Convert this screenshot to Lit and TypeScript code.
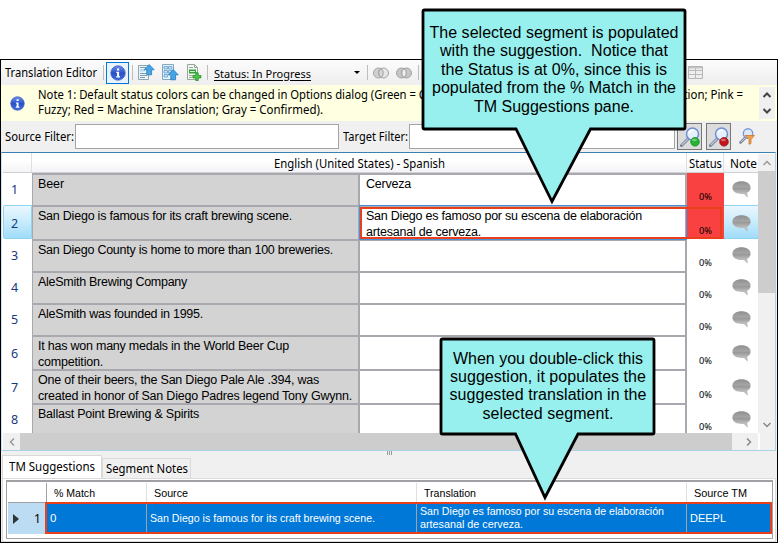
import { LitElement, html, css, svg } from "lit";
import { customElement, property } from "lit/decorators.js";
import { classMap } from "lit/directives/class-map.js";

/** One line of text that fills the given width, by tracking or (squeeze) by a horizontal scale. */
@customElement("fit-line")
class FitLine extends LitElement {
  @property() text = "";
  @property({ type: Number }) w = 0;
  @property({ type: Boolean }) squeeze = false;
  static styles = css`
    :host { display: block; white-space: pre; }
    span { display: inline-block; text-decoration: inherit; transform-origin: 0 50%; }
  `;
  render() {
    return html`<span>${this.text}</span>`;
  }
  firstUpdated() {
    const el = this.renderRoot.querySelector("span")!;
    if (!this.w) return;
    const natural = el.getBoundingClientRect().width;
    if (this.squeeze) el.style.transform = `scaleX(${this.w / natural})`;
    else el.style.letterSpacing = `${(this.w - natural) / this.text.length}px`;
  }
}

type Line = [string, number];
interface Segment {
  h: number;
  source: Line[];
  target?: Line[];
  red?: boolean;
  selected?: boolean;
}

const SEGMENTS: Segment[] = [
  { h: 32, source: [["Beer", 26]], target: [["Cerveza", 45]], red: true },
  {
    h: 34,
    source: [["San Diego is famous for its craft brewing scene.", 254]],
    target: [["San Diego es famoso por su escena de elaboración", 276], ["artesanal de cerveza.", 115]],
    red: true,
    selected: true,
  },
  { h: 32, source: [["San Diego County is home to more than 100 breweries.", 295]] },
  { h: 32, source: [["AleSmith Brewing Company", 149]] },
  { h: 32, source: [["AleSmith was founded in 1995.", 165]] },
  { h: 34, source: [["It has won many medals in the World Beer Cup", 251], ["competition.", 65]] },
  { h: 34, source: [["One of their beers, the San Diego Pale Ale .394, was", 281], ["created in honor of San Diego Padres legend Tony Gwynn.", 314]] },
  { h: 32, source: [["Ballast Point Brewing & Spirits", 161]] },
];

const lines = (ls: Line[] = []) => ls.map(([t, w]) => html`<fit-line .text=${t} .w=${w}></fit-line>`);
const tight = (ls: Line[]) => ls.map(([t, w]) => html`<fit-line .text=${t} .w=${w} .squeeze=${true}></fit-line>`);

const info = (s: number) => html`<svg width=${s} height=${s} viewBox="0 0 16 16">
  <defs><linearGradient id="ig" x1="0" y1="0" x2="0" y2="1"><stop offset="0" stop-color="#6c93ea"/><stop offset=".5" stop-color="#2a50c8"/><stop offset="1" stop-color="#3f6fe0"/></linearGradient></defs>
  <circle cx="8" cy="8" r="7.200" fill="url(#ig)" stroke="#3c5cc0" stroke-width=".8"/>
  <path d="M7 3.400h2.200v2H7zM6.300 6.800h2.800v4.400h.9v1.200H6.200v-1.200h.9V8h-.8z" fill="#fff"/></svg>`;

const arrowUp = (x: number, y: number) => svg`<path d="M${x} ${y}l5 5.2h-2.6v5h-4.8v-5h-2.6z" fill="#45a5e6" stroke="#2878b8" stroke-width=".8"/>`;

const docUp = html`<svg width="17" height="17" viewBox="0 0 17 17">
  <path d="M.5 1.500h10v14H.5z" fill="#eef5f8" stroke="#8aa7b8"/>
  <path d="M2 3.500h6M2 9.500h7M2 11.500h7M2 13.500h5" stroke="#7b9db2"/><path d="M2 5h5v2.500H2z" fill="#b9d9ea"/>
  ${arrowUp(11.2, 0.6)}</svg>`;
const docUp2 = html`<svg width="17" height="17" viewBox="0 0 17 17">
  <path d="M.5 .5h11v15H.5z" fill="#e8f3fa" stroke="#7fa9c4"/>
  <path d="M2 2.500h3.500v2.500H2zM6.500 2.500H10v2.500H6.500zM2 6.500h3.500V9H2zM6.500 6.500H10V9H6.500zM2 10.500h3.500V13H2z" fill="#cbe4f5" stroke="#5fa0cd" stroke-width=".8"/>
  ${arrowUp(11.2, 5.6)}</svg>`;
const docPlus = html`<svg width="17" height="17" viewBox="0 0 17 17">
  <path d="M1.500 .5h7l3 3v12h-10z" fill="#f3f5f2" stroke="#9aa59a"/><path d="M8.500 .5v3h3" fill="none" stroke="#9aa59a"/>
  <path d="M3 3.500h4M3 11.500h4M3 13.500h5" stroke="#9cab9c"/><path d="M3 5.500h7v4H3z" fill="#35a33c"/><path d="M4 7.500h5" stroke="#c9efc9"/>
  <path d="M9.800 8.800h2.400v2.700h2.700v2.400h-2.700v2.700H9.800v-2.700H7.100v-2.400h2.700z" fill="#4cc944" stroke="#1e8a25" stroke-width=".8"/></svg>`;

const rings = (v: number) => html`<svg width="16" height="12" viewBox="0 0 16 12">
  <g fill=${v ? "#c6c6c6" : "#d0d0d0"} stroke="#a2a2a2"><circle cx="5.500" cy="6" r="5"/><circle cx="10.500" cy="6" r="5" fill=${v ? "#c6c6c6" : "#e6e6e6"}/></g>
  <ellipse cx="8" cy="6" rx="2.200" ry="4" fill=${v ? "#efefef" : "#d8d8d8"} stroke="#a2a2a2"/></svg>`;

const table = html`<svg width="16" height="14" viewBox="0 0 16 14"><path d="M.5 .5h14v12H.5z" fill="#eee" stroke="#b5b5b5"/><path d="M.5 4.500h14M.5 8.500h14M7.500 1v11.500" stroke="#b9b9b9"/><path d="M1 1h13v1.500H1z" fill="#c4c4c4"/></svg>`;

const lens = (dot: string) => html`<svg width="20" height="20" viewBox="0 0 20 20">
  <path d="M1.500 18.500L8 12" stroke="#6f7f9a" stroke-width="3" stroke-linecap="round"/><path d="M1.800 18L8 12" stroke="#c5ccd8" stroke-width="1.200"/>
  <circle cx="12.500" cy="7" r="6" fill="#e6effc" stroke="#6e8fd8" stroke-width="1.500"/><path d="M9 6.500a4 4 0 0 1 5-3.200" stroke="#fff" stroke-width="1.600" fill="none"/>
  <circle cx="15" cy="14.800" r="4.300" fill=${dot === "g" ? "#22b432" : "#c3161c"} stroke=${dot === "g" ? "#168a22" : "#98100f"} stroke-width=".8"/>
  <ellipse cx="14.400" cy="13" rx="2.500" ry="1.300" fill="#fff" opacity=".35"/></svg>`;
const lensFunnel = html`<svg width="16" height="17" viewBox="0 0 16 17">
  <path d="M1.500 14.500L6 10" stroke="#7b88a0" stroke-width="2.600" stroke-linecap="round"/><path d="M1.800 14L6 10" stroke="#cdd3de"/>
  <circle cx="9" cy="5.500" r="4.700" fill="#dce9fb" stroke="#7a97dc" stroke-width="1.400"/>
  <path d="M6 7.500h9.500l-3.500 4v4l-2 .8v-4.800z" fill="#f0a050" stroke="#c87828" stroke-width=".8"/></svg>`;

const bubble = html`<svg width="19" height="17" viewBox="0 0 19 17">
  <defs><linearGradient id="bg" x1="0" y1="0" x2="0" y2="1"><stop offset="0" stop-color="#8f8f8f"/><stop offset=".38" stop-color="#a6a6a6"/><stop offset=".42" stop-color="#959595"/><stop offset=".8" stop-color="#c2c2c2"/><stop offset="1" stop-color="#a4a4a4"/></linearGradient></defs>
  <path d="M9.500 .2C14.800.2 18.600 2.700 18.600 6.600c0 2.400-1.400 4.200-3.400 5.200l.6 4.600-4-3.400C4.600 13.600.4 10.800.4 6.600.4 2.700 4.200.2 9.500.2z" fill="url(#bg)"/></svg>`;

const chev = (d: string, c: string, w = 1.5) => html`<svg width="10" height="10" viewBox="0 0 10 10"><path d=${d} fill="none" stroke=${c} stroke-width=${w}/></svg>`;
const UP = "M1.500 7L5 3.500 8.500 7";
const DOWN = "M1.500 3L5 6.500 8.500 3";
const LEFT = "M7 1.500L3.500 5 7 8.500";
const RIGHT = "M3 1.500L6.500 5 3 8.500";

@customElement("app-root")
class AppRoot extends LitElement {
  static styles = css`
    :host { display: block; position: relative; width: 778px; height: 543px; overflow: hidden; background: #fff; color: #000;
      font: 12px/16px "Noto Sans", "Open Sans", sans-serif; padding-top: 59px; box-sizing: border-box; }
    * { box-sizing: border-box; }
    svg { display: block; flex: none; }
    .window { height: 484px; border: 1px solid #000; background: #f0f0f0; display: flex; flex-direction: column; }
    .toolbar { height: 25px; display: flex; align-items: center; padding-left: 4px; background: linear-gradient(#fcfcfc, #eeeeee); }
    .toolbar > * { flex: none; }
    .toolbar .name { width: 98px; }
    .sep { width: 1px; height: 15px; background: #bdbdbd; }
    .toggle { width: 23px; height: 22px; border: 1px solid #0078d7; background: #eaf3fb; display: grid; place-items: center; margin: 0 3px 0 2px; }
    .docs { display: flex; gap: 7px; width: 65px; margin: 0 4px 0 5px; }
    .status { text-decoration: underline; margin-left: 6px; width: 140px; font-size: 11.5px; text-underline-offset: 2px; padding-top: 2px; }
    .caret { border: 3px solid transparent; border-top: 3px solid #000; border-bottom: 0; margin-right: 7px; }
    .rings { display: flex; gap: 7px; margin: 0 6px 0 5px; }
    .table { margin-left: 269px; }
    .notice { height: 36px; background: #ffffe1; display: flex; padding-left: 9px; }
    .notice svg { margin-top: 11px; }
    .notice .copy { padding: 2px 0 0 13px; line-height: 15px; width: 390px; flex: none; }
    .notice .tail { padding-top: 2px; line-height: 15px; margin-left: 262px; width: 74px; flex: none; }
    .notice .spin { width: 16px; height: 32px; margin: 2px 2px 0 auto; background: #f0f0f0; display: flex; flex-direction: column; justify-content: space-around; align-items: center; }
    .notice .spin svg { margin: 0; }
    .filters { height: 31px; display: flex; align-items: center; padding-left: 4px; }
    .filters > * { flex: none; }
    .filters .label { width: 70px; }
    .filters .label.t { width: 66px; margin-left: 4px; }
    .field { width: 264px; height: 25px; background: #fff; border: 1px solid #a3a3a8; }
    .field.t { width: 266px; }
    .find { width: 25px; height: 27px; border: 1px solid #777; background: #dcdcdc; display: grid; place-items: center; margin-left: 2px; }
    .find + .find { margin-left: 4px; }
    .funnel { margin-left: 8px; }
    .grid { height: 299px; border-top: 1px solid #3c7fb1; border-bottom: 1px solid #a9d4e8; border-left: 1px solid #c9e3ef; border-right: 1px solid #a9d4e8; background: #fff; display: grid; grid-template-columns: 1fr 17px; grid-template-rows: 1fr 17px; margin-right: 1px; padding-left: 1px; }
    .cols { display: grid; grid-template-columns: 29px 655px 37px 34px; grid-auto-rows: min-content; overflow: hidden; height: 281px; min-height: 0; }
    .grid { grid-template-rows: 280px 17px; }
    .hd { height: 20px; background: linear-gradient(#fff 40%, #f3f4f6); border-right: 1px solid #dcdfe3; border-bottom: 1px solid #cfcfd4; padding: 3px 0 0 2px; overflow: hidden; }
    .hd.mid { padding-left: 242px; }
    .hd.note { padding-left: 6px; border-right: 0; }
    .num { color: #153a80; font-size: 12.5px; display: flex; align-items: flex-end; padding: 0 0 5px 7px; line-height: 18px; border: 1px solid transparent; }
    .pair { display: grid; grid-template-columns: 328px 327px; grid-template-rows: 100%; font: 12.5px/16px "Liberation Sans", Arial, sans-serif; }
    .cell { border: solid #a9a8ae; border-width: 2px 2px 0 0; padding: 1px 0 0 6px; overflow: hidden; }
    .cell.src { background: #d3d3d3; border-left: 1px solid #a9a8ae; padding-left: 5px; }
    .pct { font-size: 9.500px; line-height: 12px; display: flex; align-items: flex-end; padding: 0 0 2px 12px; }
    .pct.red { background: #f94141; }
    .msg { display: flex; align-items: flex-end; padding: 0 0 6px 8px; border: 1px solid transparent; border-width: 1px 0; }
    .on { background: linear-gradient(#eaf7fe, #c8ecfc 50%, #a0dcfa); border-color: #8fd4f0; }
    .num.on { border-radius: 2px 0 0 2px; }
    .vbar { background: #f0f0f0; display: flex; flex-direction: column; margin-top: 1px; }
    .box { height: 17px; display: grid; place-items: center; background: #f0f0f0; flex: none; }
    .vthumb { height: 122px; background: #cdcdcd; }
    .grow { flex: 1; }
    .hbar { display: flex; background: #f0f0f0; }
    .hbar .box { width: 17px; }
    .hbar .box.r { width: 23px; padding-left: 10px; }
    .hthumb { width: 712px; background: #cdcdcd; }
    .corner { background: #f0f0f0; border-left: 2px solid #fff; }
    .grip { height: 4px; display: flex; gap: 1px; padding-left: 386px; }
    .grip i { width: 1px; background: #999; }
    .tabs { height: 23px; display: flex; align-items: flex-end; padding-left: 1px; }
    .tab { border: 1px solid #d9d9d9; border-bottom: 0; height: 20px; padding: 2px 0 0 3px; width: 89px; overflow: hidden; }
    .tab.act { background: #fff; height: 23px; width: 100px; padding: 3px 0 0 6px; }
    .pane { flex: 1; border: 1px solid #dcdcdc; background: #fff; margin: 0 1px 0 1px; padding: 1px 2px 2px 3px; }
    .sugg { height: 59px; border: 1px solid #a0a0a5; border-top: 2px solid #a0a0a5; padding: 1px 0 0 1px; display: grid; grid-template-columns: 39px 100px 270px 270px 85px; grid-template-rows: 20px 31px; font: 11.500px/13px "Liberation Sans", Arial, sans-serif; align-content: start; }
    .sugg .h { border-right: 1px solid #dfdfdf; display: flex; align-items: center; padding-left: 7px; overflow: hidden; }
    .sugg .h:first-child { border-right: 1px solid #a0a0a5; border-bottom: 1px solid #a0a0a5; }
    .sugg .h:nth-child(5) { border-right: 0; }
    .rowhead { background: #bcdcf4; display: flex; align-items: center; padding-left: 5px; font-family: "Noto Sans", sans-serif; font-size: 12px; }
    .rowhead b { border: 5px solid transparent; border-left: 6px solid #333; border-right: 0; margin-right: 15px; }
    .v { background: #0078d7; color: #fff; border-right: 1px solid #a0a0a5; display: flex; flex-direction: column; justify-content: center; padding: 0 0 1px 3px; overflow: hidden; }
    .v:last-child { border-right: 0; }
    .frame { position: absolute; border: 2px solid #e8401c; }
    .f1 { left: 360px; top: 207px; width: 362px; height: 32px; }
    .f2 { left: 45px; top: 502px; width: 727px; height: 32px; }
    .focus { position: absolute; left: 359px; top: 205px; width: 328px; height: 35px; border: 1px solid #4a90d8; }
    .callout { position: absolute; font: 16px/18.500px "Liberation Sans", Arial, sans-serif; display: flex; flex-direction: column; align-items: center; }
    .callout svg { position: absolute; left: 0; top: 0; }
    .callout fit-line { position: relative; }
    .c1 { left: 421px; top: 8px; width: 266px; height: 198px; padding-top: 15.500px; }
    .c2 { left: 439px; top: 337px; width: 218px; height: 165px; padding-top: 13px; line-height: 18.200px; }
  `;

  private row(s: Segment, i: number) {
    const height = `height:${s.h}px`;
    return html`
      <div class=${classMap({ num: true, on: !!s.selected })} style=${height}>${i + 1}</div>
      <div class="pair" style=${height}>
        <div class="cell src">${lines(s.source)}</div>
        <div class="cell">${lines(s.target)}</div>
      </div>
      <div class=${classMap({ pct: true, red: !!s.red })}>${tight([["0%", 13]])}</div>
      <div class=${classMap({ msg: true, on: !!s.selected })}>${bubble}</div>`;
  }

  render() {
    return html`
      <div class="window">
        <div class="toolbar">
          <fit-line class="name" squeeze .text=${"Translation Editor"} .w=${92}></fit-line>
          <i class="sep"></i><span class="toggle">${info(16)}</span><i class="sep"></i>
          <span class="docs">${docUp}${docUp2}${docPlus}</span><i class="sep"></i>
          <fit-line class="status" squeeze .text=${"Status: In Progress"} .w=${97}></fit-line>
          <i class="caret"></i><i class="sep"></i>
          <span class="rings">${rings(0)}${rings(1)}</span><i class="sep"></i>
          <span class="table">${table}</span>
        </div>
        <div class="notice">
          ${info(15)}
          <div class="copy">${tight([["Note 1: Default status colors can be changed in Options dialog (Green = C", 388], ["Fuzzy; Red = Machine Translation; Gray = Confirmed).", 285]])}</div>
          <div class="tail">${tight([["ation; Pink =", 66]])}</div>
          <div class="spin">${chev(UP, "#444", 2)}${chev(DOWN, "#444", 2)}</div>
        </div>
        <div class="filters">
          <fit-line class="label" squeeze .text=${"Source Filter:"} .w=${69}></fit-line><div class="field"></div>
          <fit-line class="label t" squeeze .text=${"Target Filter:"} .w=${65}></fit-line><div class="field t"></div>
          <span class="find">${lens("g")}</span><span class="find">${lens("r")}</span><span class="funnel">${lensFunnel}</span>
        </div>
        <div class="grid">
          <div class="cols">
            <div class="hd"></div>
            <div class="hd mid">${tight([["English (United States) - Spanish", 171]])}</div>
            <div class="hd">${tight([["Status", 33]])}</div>
            <div class="hd note">${tight([["Note", 27]])}</div>
            ${SEGMENTS.map((s, i) => this.row(s, i))}
          </div>
          <div class="vbar"><span class="box">${chev(UP, "#999")}</span><i class="vthumb"></i><i class="grow"></i><span class="box">${chev(DOWN, "#888")}</span></div>
          <div class="hbar"><span class="box">${chev(LEFT, "#999")}</span><i class="hthumb"></i><span class="box r">${chev(RIGHT, "#888")}</span></div>
          <div class="corner"></div>
        </div>
        <div class="grip"><i></i><i></i><i></i></div>
        <div class="tabs">
          <div class="tab act">${tight([["TM Suggestions", 86]])}</div>
          <div class="tab">${tight([["Segment Notes", 82]])}</div>
        </div>
        <div class="pane">
          <div class="sugg">
            <div class="h"></div>
            ${([["% Match", 41], ["Source", 34], ["Translation", 52], ["Source TM", 53]] as Line[]).map((l) => html`<div class="h">${tight([l])}</div>`)}
            <div class="rowhead"><b></b>1</div>
            <div class="v">0</div>
            <div class="v">${tight([["San Diego is famous for its craft brewing scene.", 225]])}</div>
            <div class="v">${tight([["San Diego es famoso por su escena de elaboración", 244], ["artesanal de cerveza.", 103]])}</div>
            <div class="v">${tight([["DEEPL", 36]])}</div>
          </div>
        </div>
      </div>
      <div class="focus"></div>
      <div class="frame f1"></div>
      <div class="frame f2"></div>
      <div class="callout c1">
        <svg width="266" height="198"><path d="M3.500 2h259q1.500 0 1.500 1.500v116q0 1.500-1.500 1.500H169.500L131 193.500 95 121H3.500Q2 121 2 119.500V3.500Q2 2 3.500 2z" fill="#97f0ee" stroke="#000" stroke-width="2.800"/></svg>
        ${lines([["The selected segment is populated", 249], ["with the suggestion.  Notice that", 228], ["the Status is at 0%, since this is", 226], ["populated from the % Match in the", 244], ["TM Suggestions pane.", 160]])}
      </div>
      <div class="callout c2">
        <svg width="218" height="165"><path d="M3.500 2h210q1.500 0 1.500 1.500v92q0 1.500-1.500 1.500H139L106 160.500 76.500 97H3.500Q2 97 2 95.500V3.500Q2 2 3.500 2z" fill="#97f0ee" stroke="#000" stroke-width="2.800"/></svg>
        ${lines([["When you double-click this", 190], ["suggestion, it populates the", 196], ["suggested translation in the", 197], ["selected segment.", 131]])}
      </div>`;
  }
}
